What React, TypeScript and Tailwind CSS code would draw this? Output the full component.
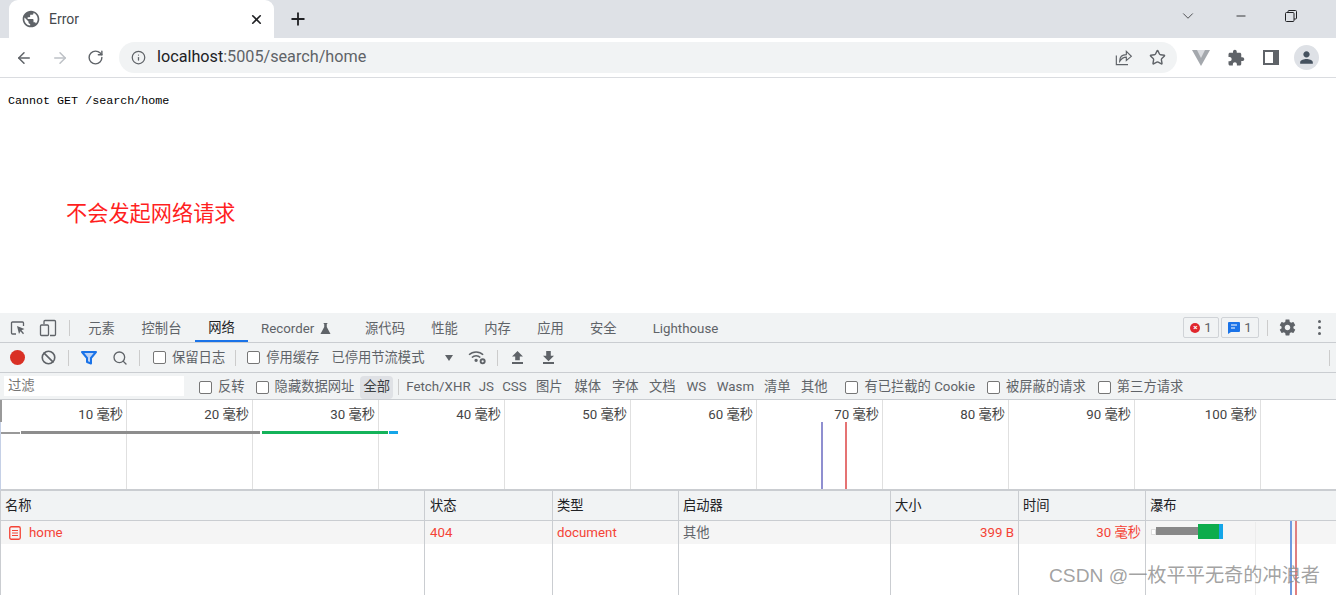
import React from 'react';
import { ArrowLeft, ArrowRight, RotateCw, Info, Star, X, Plus, ChevronDown, Minus, Search, Ban } from 'lucide-react';

const tabs = [
  { label: '元素', cls: 'w-[53px]' },
  { label: '控制台', cls: 'w-[67px]' },
  { label: '网络', cls: 'w-[53px] border-b-2 border-[#1a73e8] text-[#202124]' },
  { label: 'Recorder', cls: 'w-[104px] justify-start pl-[13px]', flask: true },
  { label: '源代码', cls: 'w-[66px]' },
  { label: '性能', cls: 'w-[53px]' },
  { label: '内存', cls: 'w-[53px]' },
  { label: '应用', cls: 'w-[53px]' },
  { label: '安全', cls: 'w-[63px] justify-start pl-[13px]' },
  { label: 'Lighthouse', cls: 'w-[91px]' },
];

const typeFilters = [
  { label: 'Fetch/XHR', cls: 'w-[72px]' },
  { label: 'JS', cls: 'w-[24px]' },
  { label: 'CSS', cls: 'w-[32px]' },
  { label: '图片', cls: 'w-[38px]' },
  { label: '媒体', cls: 'w-[39px]' },
  { label: '字体', cls: 'w-[36px]' },
  { label: '文档', cls: 'w-[38px]' },
  { label: 'WS', cls: 'w-[30px]' },
  { label: 'Wasm', cls: 'w-[48px]' },
  { label: '清单', cls: 'w-[36px]' },
  { label: '其他', cls: 'w-[38px]' },
];

const ticks = ['10 毫秒', '20 毫秒', '30 毫秒', '40 毫秒', '50 毫秒', '60 毫秒', '70 毫秒', '80 毫秒', '90 毫秒', '100 毫秒'];

const gridCols = 'grid grid-cols-[424px_128px_126px_212px_128px_127px_1fr]';

const Check: React.FC<{ label: string; cls?: string }> = ({ label, cls }) => (
  <label className={`flex items-center shrink-0 ${cls ?? ''}`}>
    <span className="w-[13px] h-[13px] rounded-[2px] border border-[#767676] bg-white mr-[6px]" />
    <span>{label}</span>
  </label>
);

const Sep: React.FC<{ cls?: string }> = ({ cls }) => <div className={`w-px h-[16px] bg-[#ccc] shrink-0 ${cls ?? ''}`} />;

const App: React.FC = () => {
  return (
    <div className="w-full h-[595px] overflow-hidden flex flex-col bg-white font-['Roboto','Noto_Sans_CJK_SC',sans-serif] text-[13.3px] text-[#5f6368]">
      {/* Tab strip */}
      <div className="h-[38px] shrink-0 bg-[#dee1e6] flex items-end pl-[9px]">
        <div className="w-[265px] h-[38px] bg-white rounded-t-[9px] flex items-center pl-[12px] pr-[10px]">
          <svg viewBox="0 0 24 24" className="w-[20px] h-[20px] fill-[#5f6368]">
            <path d="M12 2C6.48 2 2 6.48 2 12s4.48 10 10 10 10-4.48 10-10S17.52 2 12 2zm-1 17.93c-3.95-.49-7-3.85-7-7.93 0-.62.08-1.21.21-1.79L9 15v1c0 1.1.9 2 2 2v1.93zm6.9-2.54c-.26-.81-1-1.39-1.9-1.39h-1v-3c0-.55-.45-1-1-1H8v-2h2c.55 0 1-.45 1-1V7h2c1.1 0 2-.9 2-2v-.41c2.93 1.19 5 4.06 5 7.41 0 2.08-.8 3.97-2.1 5.39z" />
          </svg>
          <span className="ml-[8px] text-[#45494d] text-[14px]">Error</span>
          <X className="ml-auto w-[15px] h-[15px] text-[#202124]" strokeWidth={2.6} />
        </div>
        <div className="h-[38px] flex items-center ml-[14px]">
          <Plus className="w-[20px] h-[20px] text-[#202124]" strokeWidth={2.2} />
        </div>
        <div className="ml-auto h-[38px] flex items-center pb-[6px] text-[#202124]">
          <ChevronDown className="w-[18px] h-[18px]" strokeWidth={1} />
          <Minus className="w-[14px] h-[14px] ml-[37px]" strokeWidth={1.5} />
          <svg viewBox="0 0 12 12" className="w-[12px] h-[12px] ml-[37px] mr-[39px] fill-none stroke-[#202124]">
            <rect x="0.5" y="2.5" width="8.5" height="9" rx="1" />
            <path d="M3 2.5V1.5a1 1 0 0 1 1-1h6.5a1 1 0 0 1 1 1V8a1 1 0 0 1-1 1H9" />
          </svg>
        </div>
      </div>

      {/* Address bar */}
      <div className="h-[40px] shrink-0 bg-white border-b border-[#dadce0] flex items-center pl-[15px] pr-[16px]">
        <ArrowLeft className="w-[18px] h-[18px] text-[#5f6368]" strokeWidth={2} />
        <ArrowRight className="w-[18px] h-[18px] ml-[18px] text-[#bdc1c6]" strokeWidth={2} />
        <RotateCw className="w-[17px] h-[17px] ml-[18px] text-[#5f6368]" strokeWidth={2} />
        <div className="ml-[15px] w-[1058px] h-[31px] rounded-full bg-[#f1f3f4] flex items-center pl-[12px] pr-[11px]">
          <Info className="w-[15px] h-[15px] text-[#5f6368]" strokeWidth={2} />
          <span className="ml-[11px] text-[16.2px] text-[#202124]">
            localhost<span className="text-[#5f6368]">:5005/search/home</span>
          </span>
          <svg viewBox="0 0 24 24" className="ml-auto w-[20px] h-[20px] fill-none stroke-[#5f6368] stroke-[1.4]">
            <path d="M4 9v11h14" />
            <path d="M8 16c0-5 3-8 8-8V4l6 6-6 5v-4c-4 0-6 2-8 5z" />
          </svg>
          <Star className="ml-[16px] w-[17px] h-[17px] text-[#5f6368]" strokeWidth={2} />
        </div>
        <svg viewBox="0 0 18 16" className="ml-[15px] w-[18px] h-[16px]">
          <path d="M0 0h18L9 16z" fill="#a4a8ad" />
          <path d="M5 0h8L9 8z" fill="#dadce0" />
        </svg>
        <svg viewBox="0 0 24 24" className="ml-[17px] w-[18px] h-[18px] fill-[#5f6368]">
          <path d="M20.5 11H19V7c0-1.1-.9-2-2-2h-4V3.5C13 2.12 11.88 1 10.5 1S8 2.12 8 3.5V5H4c-1.1 0-1.99.9-1.99 2v3.8H3.5c1.49 0 2.7 1.21 2.7 2.7s-1.21 2.7-2.7 2.7H2V20c0 1.1.9 2 2 2h3.8v-1.5c0-1.49 1.21-2.7 2.7-2.7 1.49 0 2.7 1.21 2.7 2.7V22H17c1.1 0 2-.9 2-2v-4h1.5c1.38 0 2.5-1.12 2.5-2.5S21.88 11 20.5 11z" />
        </svg>
        <div className="ml-[18px] w-[16px] h-[15px] border-[2px] border-[#5f6368] border-r-[6px] bg-white" />
        <div className="ml-[15px] w-[25px] h-[25px] rounded-full bg-[#dee1e6] flex items-center justify-center">
          <svg viewBox="0 0 24 24" className="w-[19px] h-[19px] fill-[#45525f]">
            <path d="M12 12c2.21 0 4-1.79 4-4s-1.79-4-4-4-4 1.79-4 4 1.79 4 4 4zm0 2c-2.67 0-8 1.34-8 4v2h16v-2c0-2.66-5.33-4-8-4z" />
          </svg>
        </div>
      </div>

      {/* Page body */}
      <div className="h-[235px] shrink-0 bg-white pt-[15px] pl-[8px]">
        <div className="font-['Liberation_Mono',monospace] text-[11.7px] leading-[16px] text-black">Cannot GET /search/home</div>
        <div className="mt-[88px] ml-[58px] text-[21.2px] leading-[30px] text-[#ff1f1f] font-['Noto_Sans_CJK_SC',sans-serif]">不会发起网络请求</div>
      </div>

      {/* DevTools tabs */}
      <div className="h-[30px] shrink-0 bg-[#f1f3f4] border-b border-[#cacdd1] flex items-stretch">
        <div className="w-[75px] flex items-center pl-[10px] shrink-0">
          <svg viewBox="0 0 16 16" className="w-[16px] h-[16px] fill-none stroke-[#5f6368] stroke-[1.3]">
            <path d="M6 14H2.5a1 1 0 0 1-1-1V3a1 1 0 0 1 1-1h10a1 1 0 0 1 1 1v3" />
            <path d="M7 6l7.5 3-3 1.2 2.5 3-1 1-2.5-3L9 14z" fill="#5f6368" stroke="none" />
          </svg>
          <svg viewBox="0 0 18 18" className="ml-[13px] w-[18px] h-[18px] fill-none stroke-[#5f6368] stroke-[1.3]">
            <path d="M5 5V2.5a1 1 0 0 1 1-1h9.5a1 1 0 0 1 1 1v13a1 1 0 0 1-1 1H11" />
            <rect x="1.5" y="6" width="8" height="10.5" rx="1" />
          </svg>
          <Sep cls="ml-[12px]" />
        </div>
        {tabs.map((t) => (
          <div key={t.label} className={`flex items-center justify-center shrink-0 pt-[2px] ${t.cls}`}>
            {t.label}
            {t.flask && (
              <svg viewBox="0 0 12 12" className="ml-[6px] w-[11px] h-[11px] fill-[#5f6368]">
                <path d="M4 0h4v1H7.4v3.4L11.5 12H.5l4.1-7.6V1H4z" />
              </svg>
            )}
          </div>
        ))}
        <div className="ml-auto flex items-center pr-[15px]">
          <div className="h-[21px] w-[36px] rounded-[2px] border border-[#d0d3d7] flex items-center justify-center gap-[4px]">
            <span className="w-[10px] h-[10px] rounded-full bg-[#e0272d] text-white text-[8px] leading-[10px] text-center font-bold">×</span>
            <span>1</span>
          </div>
          <div className="ml-[2px] h-[21px] w-[38px] rounded-[2px] border border-[#d0d3d7] flex items-center justify-center gap-[4px]">
            <svg viewBox="0 0 12 12" className="w-[12px] h-[12px]">
              <path d="M1 0h10a1 1 0 0 1 1 1v8a1 1 0 0 1-1 1H3l-3 2V1a1 1 0 0 1 1-1z" fill="#1a73e8" />
              <path d="M3 3h6M3 6h4" stroke="#fff" strokeWidth="1" />
            </svg>
            <span>1</span>
          </div>
          <Sep cls="ml-[8px]" />
          <svg viewBox="0 0 24 24" className="ml-[10px] w-[19px] h-[19px] fill-[#5f6368]">
            <path d="M19.43 12.98c.04-.32.07-.64.07-.98s-.03-.66-.07-.98l2.11-1.65c.19-.15.24-.42.12-.64l-2-3.46c-.12-.22-.39-.3-.61-.22l-2.49 1c-.52-.4-1.08-.73-1.69-.98l-.38-2.65C14.46 2.18 14.25 2 14 2h-4c-.25 0-.46.18-.49.42l-.38 2.65c-.61.25-1.17.59-1.69.98l-2.49-1c-.23-.09-.49 0-.61.22l-2 3.46c-.13.22-.07.49.12.64l2.11 1.65c-.04.32-.07.65-.07.98s.03.66.07.98l-2.11 1.65c-.19.15-.24.42-.12.64l2 3.46c.12.22.39.3.61.22l2.49-1c.52.4 1.08.73 1.69.98l.38 2.65c.03.24.24.42.49.42h4c.25 0 .46-.18.49-.42l.38-2.65c.61-.25 1.17-.59 1.69-.98l2.49 1c.23.09.49 0 .61-.22l2-3.46c.12-.22.07-.49-.12-.64l-2.11-1.65zM12 15.5c-1.93 0-3.5-1.57-3.5-3.5s1.57-3.5 3.5-3.5 3.5 1.57 3.5 3.5-1.57 3.5-3.5 3.5z" />
          </svg>
          <div className="ml-[21px] flex flex-col gap-[3px]">
            <span className="w-[3px] h-[3px] rounded-full bg-[#5f6368]" />
            <span className="w-[3px] h-[3px] rounded-full bg-[#5f6368]" />
            <span className="w-[3px] h-[3px] rounded-full bg-[#5f6368]" />
          </div>
        </div>
      </div>

      {/* Network toolbar */}
      <div className="h-[30px] shrink-0 bg-[#f1f3f4] border-b border-[#cacdd1] flex items-center pl-[10px] pr-[6px]">
        <span className="w-[15px] h-[15px] rounded-full bg-[#d93025] shrink-0" />
        <Ban className="ml-[16px] w-[15px] h-[15px] text-[#5f6368]" strokeWidth={2.6} />
        <Sep cls="ml-[12px]" />
        <svg viewBox="0 0 16 14" className="ml-[12px] w-[16px] h-[14px] fill-none stroke-[#1a73e8] stroke-[2]">
          <path d="M1 1h14L10 7v5.5L6 11V7z" fill="#8ab4f8" fillOpacity="0.5" strokeLinejoin="round" />
        </svg>
        <Search className="ml-[15px] w-[16px] h-[16px] text-[#5f6368]" strokeWidth={2} />
        <Sep cls="ml-[11px]" />
        <Check label="保留日志" cls="ml-[13px]" />
        <Sep cls="ml-[10px]" />
        <Check label="停用缓存" cls="ml-[11px]" />
        <span className="ml-[12px] shrink-0">已停用节流模式</span>
        <span className="ml-[21px] w-0 h-0 border-x-[4px] border-x-transparent border-t-[6px] border-t-[#5f6368]" />
        <svg viewBox="0 0 20 16" className="ml-[15px] w-[19px] h-[15px] fill-none stroke-[#5f6368] stroke-[1.6]">
          <path d="M1 5c4-4 11-4 15 0M4 8c2.5-2.5 6.5-2.5 9 0" />
          <circle cx="8.5" cy="11" r="1" fill="#5f6368" />
          <circle cx="15.5" cy="12" r="2.2" strokeWidth="2" />
        </svg>
        <Sep cls="ml-[10px]" />
        <svg viewBox="0 0 12 14" className="ml-[14px] w-[11px] h-[13px] fill-[#5f6368]">
          <path d="M6 0l6 6H8.5v4h-5V6H0zM0 12h12v2H0z" />
        </svg>
        <svg viewBox="0 0 12 14" className="ml-[20px] w-[11px] h-[13px] fill-[#5f6368]">
          <path d="M3.500 0h5v5H12L6 11 0 5h3.500zM0 12h12v2H0z" />
        </svg>
        <Sep cls="ml-auto" />
      </div>

      {/* Filter bar */}
      <div className="h-[27px] shrink-0 bg-[#f1f3f4] border-b border-[#cacdd1] flex items-center pl-[4px] pt-[2px]">
        <div className="-mt-[2px] w-[180px] h-[20px] bg-white shrink-0 flex items-center pl-[4px] text-[#757575]">过滤</div>
        <Check label="反转" cls="ml-[15px]" />
        <Check label="隐藏数据网址" cls="ml-[11px]" />
        <span className="ml-[6px] w-[33px] h-[23px] rounded-[4px] bg-[#dfe1e5] flex items-center justify-center shrink-0 text-[#3c4043]">全部</span>
        <Sep cls="ml-[5px]" />
        <div className="flex items-center ml-[3px]">
          {typeFilters.map((f) => (
            <span key={f.label} className={`shrink-0 text-center ${f.cls}`}>{f.label}</span>
          ))}
        </div>
        <Check label="有已拦截的 Cookie" cls="ml-[12px]" />
        <Check label="被屏蔽的请求" cls="ml-[12px]" />
        <Check label="第三方请求" cls="ml-[12px]" />
      </div>

      {/* Overview */}
      <div className="relative h-[91px] shrink-0 bg-white border-b-[2px] border-[#cacdd1] flex border-l border-l-[#c5d0e6]">
        {ticks.map((t) => (
          <div key={t} className="w-[126px] shrink-0 border-r border-[#e0e0e0] text-right pr-[3px] pt-[5px] text-[#444] leading-[20px]">{t}</div>
        ))}
        <div className="flex-1 pl-[100px] text-right pt-[5px] text-[#444] leading-[20px] overflow-hidden">1</div>
        <div className="absolute left-[-1px] top-0 w-[2px] h-[22px] bg-[#999]" />
        <div className="absolute left-[0px] top-[32px] w-[19px] h-[2px] bg-[#999]" />
        <div className="absolute left-[20px] top-[31px] w-[239px] h-[3px] bg-[#8d8d8d]" />
        <div className="absolute left-[261px] top-[31px] w-[126px] h-[3px] bg-[#14b35a]" />
        <div className="absolute left-[388px] top-[31px] w-[9px] h-[3px] bg-[#14a5e8]" />
        <div className="absolute left-[820px] top-[22px] bottom-0 w-[2px] bg-[#8f8fd0]" />
        <div className="absolute left-[844px] top-[22px] bottom-0 w-[2px] bg-[#e57373]" />
      </div>

      {/* Request table */}
      <div className="relative flex-1 min-h-0 flex flex-col border-l border-[#cacdd1] text-[#303942]">
        <div className={`h-[30px] shrink-0 bg-[#f1f3f4] border-b border-[#cacdd1] ${gridCols}`}>
          {['名称', '状态', '类型', '启动器', '大小', '时间', '瀑布'].map((h, i) => (
            <div key={h} className={`flex items-center text-[#202124] ${i === 1 ? 'pl-[5px]' : 'pl-[4px]'} ${i < 6 ? 'border-r border-[#cacdd1]' : ''}`}>{h}</div>
          ))}
        </div>
        <div className={`h-[23px] shrink-0 bg-[#f5f5f5] text-[#f44336] ${gridCols}`}>
          <div className="border-r border-[#cacdd1] flex items-center pl-[8px]">
            <svg viewBox="0 0 12 14" className="w-[12px] h-[14px] fill-none stroke-[#f44336]">
              <rect x="0.75" y="0.75" width="10.500" height="12.500" rx="1.500" strokeWidth="1.300" />
              <path d="M3 4.500h6M3 7h6M3 9.500h6" strokeWidth="1" />
            </svg>
            <span className="ml-[8px]">home</span>
          </div>
          <div className="border-r border-[#cacdd1] flex items-center pl-[5px]">404</div>
          <div className="border-r border-[#cacdd1] flex items-center pl-[4px]">document</div>
          <div className="border-r border-[#cacdd1] flex items-center pl-[4px] text-[#5f6368]">其他</div>
          <div className="border-r border-[#cacdd1] flex items-center justify-end pr-[4px]">399 B</div>
          <div className="border-r border-[#cacdd1] flex items-center justify-end pr-[4px]">30 毫秒</div>
          <div className="flex items-start pl-[5px] pt-[3px]">
            <span className="mt-[5px] w-[5px] h-[6px] bg-white border border-[#ddd]" />
            <span className="mt-[3px] w-[42px] h-[8px] bg-[#888]" />
            <span className="w-[21px] h-[15px] bg-[#0dac4c]" />
            <span className="w-[4px] h-[15px] bg-[#14a5e8]" />
          </div>
        </div>
        <div className={`flex-1 bg-white ${gridCols}`}>
          <div className="border-r border-[#cacdd1]" />
          <div className="border-r border-[#cacdd1]" />
          <div className="border-r border-[#cacdd1]" />
          <div className="border-r border-[#cacdd1]" />
          <div className="border-r border-[#cacdd1]" />
          <div className="border-r border-[#cacdd1]" />
          <div />
        </div>
        <div className="absolute left-[1254px] top-[31px] bottom-0 w-px bg-[#ececec]" />
        <div className="absolute left-[1289px] top-[30px] bottom-0 w-[2px] bg-[#6f9be0]" />
        <div className="absolute left-[1294px] top-[30px] bottom-0 w-[2px] bg-[#e08080]" />
        {/* watermark */}
        <div className="absolute left-[1048px] top-[71px] text-[19.2px] leading-[28px] text-[#8a8a8a]/80 font-['Liberation_Sans','Noto_Sans_CJK_SC',sans-serif] whitespace-nowrap">CSDN @一枚平平无奇的冲浪者</div>
      </div>
    </div>
  );
};

export default App;
